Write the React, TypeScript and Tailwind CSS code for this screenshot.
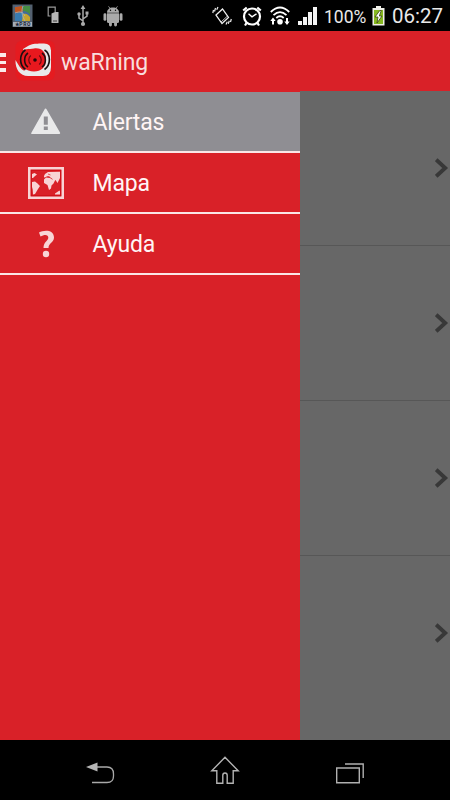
import type { ReactNode } from "react";

function AppBadgeIcon() {
  return (
    <svg width="22" height="24" viewBox="0 0 22 24">
      <rect x="0.5" y="0.5" width="20" height="22.5" fill="#53606f" />
      <rect x="3" y="2" width="15" height="15" fill="#426b9a" />
      <path d="M3 3l7-1 1 5-4 4-4-3z" fill="#c0561f" />
      <path d="M11 2h7v9c-2-3-4-4-7-4z" fill="#468d45" />
      <path d="M3 10l5-2 4 2-1 7H3z" fill="#387bb0" />
      <path d="M11 10c4-1 5 1 7 3v4h-8z" fill="#c5a52c" />
      <path d="M3 9c5-2 8-1 10 3M11 2c-2 5-1 10 2 15" fill="none" stroke="#a9b6bd" strokeWidth="0.8" />
      <rect x="1" y="18" width="19" height="4.5" fill="#a5adb7" />
      <text x="2.5" y="22" fontSize="5" fontWeight="700" textLength="16" fill="#17243b" fontFamily="Roboto, sans-serif">
        ★PRO
      </text>
    </svg>
  );
}

function DevicesIcon() {
  return (
    <svg width="14" height="18" viewBox="0 0 14 18" fill="none" stroke="#999" strokeWidth="1.2">
      <path d="M3.5 10H1.2V1.2h7V6" />
      <path d="M4.5 7.5L8 6h3.500v11h-7z" fill="#b5b5b5" stroke="none" />
      <path d="M6 15h4" stroke="#555" />
    </svg>
  );
}

function UsbIcon() {
  return (
    <svg width="12" height="22" viewBox="0 0 12 22" fill="none" stroke="#aaa" strokeWidth="1.5">
      <path d="M6 3v16M6 16l-4-3V9M6 14l4-3V8" />
      <path d="M6 0l2.4 4H3.6zM8.5 6.5h3v3h-3z" fill="#aaa" stroke="none" />
      <circle cx="2" cy="9" r="1.7" fill="#aaa" stroke="none" />
      <circle cx="6" cy="19" r="2.1" fill="#aaa" stroke="none" />
    </svg>
  );
}

function AndroidIcon() {
  return (
    <svg width="20" height="21" viewBox="0 0 20 21" fill="#aaa">
      <path d="M4 6.7C4 3.5 6.5 1.5 10 1.5s6 2 6 5.2z" />
      <path d="M5.5 0.3l2 2.7M14.5 0.3l-2 2.7" stroke="#aaa" strokeWidth="0.8" />
      <circle cx="7.5" cy="4.2" r="0.7" fill="#000" />
      <circle cx="12.5" cy="4.2" r="0.7" fill="#000" />
      <path d="M4 7.3h12v8.2q0 1.5-1.5 1.5h-9Q4 17 4 15.5z" />
      <rect x="0.5" y="7.3" width="2.9" height="7.5" rx="1.4" />
      <rect x="16.6" y="7.3" width="2.9" height="7.5" rx="1.4" />
      <rect x="6" y="14" width="2.9" height="6.5" rx="1.4" />
      <rect x="11.1" y="14" width="2.9" height="6.5" rx="1.4" />
    </svg>
  );
}

function VibrateIcon() {
  return (
    <svg width="20" height="20" viewBox="0 0 20 20" fill="none" stroke="#eee" strokeWidth="1.2">
      <path d="M4 9l6.5-6 6 8.500-6.500 6z" strokeWidth="1.3" />
      <path d="M9 16l6.500-6" strokeWidth="0.8" />
      <path d="M0.8 7L1.500 4M2.500 5.500L3.500 2M4.700 3.800L6 1M14 18.500l1.300-2.700M16.300 17.700l1-3M18.500 16l.8-3" />
    </svg>
  );
}

function AlarmIcon() {
  return (
    <svg width="20" height="21" viewBox="0 0 20 21" fill="none" stroke="#fff">
      <circle cx="10" cy="10.5" r="8" strokeWidth="2.2" />
      <path d="M6.5 7.8l3.5 3 4.5-3" strokeWidth="1.4" />
      <path d="M1.2 4.5l3.5-3M15.3 1.5l3.5 3M4.5 17L3 19.5M15.5 17l1.5 2.5" strokeWidth="2.2" />
    </svg>
  );
}

function WifiIcon() {
  return (
    <svg width="20" height="20" viewBox="0 0 20 20" fill="none" stroke="#fff" strokeWidth="1.8">
      <path d="M0.8 6Q10-3 19.2 6M3.5 9.2Q10 3 16.5 9.2M6.3 12Q10 8.5 13.7 12" />
      <circle cx="10" cy="15.8" r="2.8" fill="#fff" stroke="none" />
      <path d="M3 11.5L5.700 15H4v3.500H2V15H.3zM17 19l-2.700-3.500H16V12h2v3.500h1.700z" fill="#fff" stroke="none" />
    </svg>
  );
}

function SignalIcon() {
  return (
    <svg width="20" height="18" viewBox="0 0 20 18" fill="#f4f4f4">
      <path d="M0 14h4v4H0zM5 10h4v8H5zM10 5h4v13h-4zM15 0h4v18h-4z" />
    </svg>
  );
}

function BatteryIcon() {
  return (
    <svg width="13" height="20" viewBox="0 0 13 20">
      <path d="M4 0h5v2h3.5v17.5H.5V2H4z" fill="#f0f0e9" />
      <path d="M2 4h9v14H2z" fill="#86b81f" />
      <path d="M7.8 4.5L3 11h3l-1 6 5-7H7.300l2-5.500z" fill="#fff" stroke="#39420d" strokeWidth="0.8" />
    </svg>
  );
}

function StatusBar() {
  return (
    <div className="flex h-[31px] shrink-0 bg-black text-[#e9e9e9]">
      <div className="ml-3 mt-1 w-[35px]"><AppBadgeIcon /></div>
      <div className="mt-1.5 w-[30px]"><DevicesIcon /></div>
      <div className="mt-[5px] w-[26px]"><UsbIcon /></div>
      <div className="mt-[6px]"><AndroidIcon /></div>
      <div className="ml-auto mt-1.5 w-[30px]"><VibrateIcon /></div>
      <div className="mt-1.5 w-7"><AlarmIcon /></div>
      <div className="mt-1.5 w-7"><WifiIcon /></div>
      <div className="mt-[7px] w-[26px]"><SignalIcon /></div>
      <div className="w-12 pt-[5px] text-[17.5px] leading-[24px]">100%</div>
      <div className="mt-1.5 w-5"><BatteryIcon /></div>
      <div className="w-[58px] text-[20.5px] leading-[33px]">06:27</div>
    </div>
  );
}

function AppLogo() {
  return (
    <svg width="41" height="41" viewBox="0 0 41 41" fill="none">
      <rect x="0.5" y="0.5" width="39.5" height="40" rx="7" fill="#e51b20" />
      <path d="M13 6C17 3.5 20 4 24 3.500h5q7 0 7 7V27q0 9-8 9H13C5 36 0 29 .5 20c3 5 5 9 9 11L8 9z" fill="#e9e9e9" />
      <path d="M5 12C8 8 14 9.500 19 8.500c8-1 12 4 12 11 0 8-5 12-12 12C11 31.500 5 26 4 20z" fill="#e8181e" />
      <path d="M10.5 10C4 14 4 25 10.500 29.500M29.500 10c6.500 4 6.500 15 0 19.500" stroke="#171111" strokeWidth="1.6" />
      <path d="M13 13c-4.500 3-4.500 11 0 14M27 13c4.500 3 4.500 11 0 14" stroke="#220d0f" strokeWidth="1.6" />
      <path d="M15.800 15.500c-2.700 2-2.700 7 0 9M24.200 15.500c2.700 2 2.700 7 0 9" stroke="#6b080f" strokeWidth="1.2" />
      <circle cx="20" cy="20" r="1.8" fill="#240608" />
    </svg>
  );
}

function Header() {
  return (
    <header className="flex h-[60px] shrink-0 items-start bg-[#d92128] text-[#f9dddd]">
      <div className="mt-[22px] flex w-[15px] flex-col gap-1">
        <div className="h-[3.5px] w-1.5 bg-[#fbeaea]" />
        <div className="h-[3.5px] w-1.5 bg-[#fbeaea]" />
        <div className="h-[3.5px] w-1.5 bg-[#fbeaea]" />
      </div>
      <div className="w-[46px] pt-[9px]"><AppLogo /></div>
      <h1 className="pt-4 text-[23px] leading-[32px] tracking-[-0.1px]">waRning</h1>
    </header>
  );
}

function WarningIcon() {
  return (
    <svg width="30" height="27" viewBox="0 0 30 27" fill="#e9e9ea">
      <path d="M14.5 0.5Q15.2 0.5 15.7 1.5L29 24.5q.6 1.5-.8 1.500H1q-1.300 0-.5-1.500L13.500 1.500q.4-1 1-1z" />
      <path d="M12.8 8.5h4v8.200h-4zM12.800 18.500h4v3.500h-4z" fill="#8f8e93" />
    </svg>
  );
}

function WorldMapIcon() {
  return (
    <svg width="36" height="32" viewBox="0 0 36 32" fill="#f8d4d5">
      <rect x="1.3" y="1.3" width="33.4" height="29.4" fill="none" stroke="#f8d4d5" strokeWidth="2.6" />
      <rect x="3.3" y="3.3" width="29.4" height="25.4" fill="none" stroke="#ce1017" strokeWidth="1" />
      <path d="M4 7l2.500-1 2.500 1.500-2 1.500-2 2H4zM4 15l3-.5 2.500 2 2.500 2.500-2 3-3 5-2 .5-.3-5L4 20z" />
      <path d="M16 12.500l2-2 4 .5 3 2 2 .5-1.500 3-2 2-.5 3-2 1.500-1.500-5-3.500-2zM16 9l1-2 3-2 12-.3V11l-1.500 3-1 2-2-3-1.500 1.500-2-3-3-2-3 .5-2 .5zM27 26.500l4.500-3 .5 1v3h-5z" />
      <path d="M20 7l2.500 1M18.500 9.500l3 .2" stroke="#d92128" strokeWidth="0.7" />
    </svg>
  );
}

function QuestionIcon() {
  return (
    <svg width="17" height="28" viewBox="0 0 17 28" fill="#f8d4d5">
      <path d="M1 2.5C6-.5 16-.5 16 7.5c0 5-5.500 5.500-5.500 10.500H5.500C5.500 11.500 10.300 11 10.300 7.700 10.300 4 6 4.500 2.500 6.500z" />
      <circle cx="8" cy="24" r="3.2" />
    </svg>
  );
}

type MenuRowProps = {
  label: string;
  icon: ReactNode;
  active?: boolean;
};

function MenuRow({ label, icon, active }: MenuRowProps) {
  return (
    <li className={`flex h-[61px] items-center border-b-2 border-[#fae6e6] ${active ? "bg-[#8f8e93]" : "bg-[#d92128]"}`}>
      <div className="flex w-[92.5px] justify-center">{icon}</div>
      <span className="pt-[3px] text-[23px] leading-[34px] tracking-[-0.2px] text-[#fff5f5]">{label}</span>
    </li>
  );
}

function Drawer() {
  return (
    <nav className="w-[300px] bg-[#d92128] pt-px">
      <ul>
        <MenuRow label="Alertas" icon={<WarningIcon />} active />
        <MenuRow label="Mapa" icon={<WorldMapIcon />} />
        <MenuRow label="Ayuda" icon={<QuestionIcon />} />
      </ul>
    </nav>
  );
}

function AlertRows() {
  return (
    <div className="w-[150px] bg-[#676767]">
      {[0, 1, 2, 3].map((row) => (
        <div
          key={row}
          className="flex h-[155px] items-center justify-end border-b border-[#575757] pr-px last:border-transparent"
        >
          <svg width="14" height="20" viewBox="0 0 14 20" fill="none" stroke="#383838" strokeWidth="3.9">
            <path d="M1.2 1.700L10.200 10l-9 8.300" />
          </svg>
        </div>
      ))}
    </div>
  );
}

function NavigationBar() {
  return (
    <footer className="flex h-[60px] shrink-0 items-start bg-black">
      <svg className="ml-[86px] mt-[21px]" width="29" height="23" viewBox="0 0 29 23" fill="none" stroke="#a9a9a9" strokeWidth="1.3">
        <path d="M9 6h12q6.5 0 6.500 7v2q0 6.500-6.500 6.500H6" />
        <path d="M0 6L11.5 1.500v9z" fill="#b5b5b5" stroke="none" />
      </svg>
      <svg className="ml-[95px] mt-[16px]" width="30" height="29" viewBox="0 0 30 29" fill="none" stroke="#b3b3b3" strokeWidth="1.4">
        <path d="M15 1.3L1.800 14.800H6.800v12.400h6v-8q0-2.200 2.200-2.200t2.200 2.200v8h6V14.800h5z" />
      </svg>
      <svg className="ml-[95px] mt-[22px]" width="30" height="24" viewBox="0 0 30 24" fill="none" stroke="#b0b0b0" strokeWidth="1.4">
        <path d="M1.7 6h22.600v14.700H1.700zM10 2h18.200v14" />
      </svg>
    </footer>
  );
}

export default function App() {
  return (
    <div className="flex h-[800px] w-[450px] flex-col overflow-hidden bg-black font-[Roboto,sans-serif]">
      <StatusBar />
      <Header />
      <main className="flex min-h-0 flex-1">
        <Drawer />
        <AlertRows />
      </main>
      <NavigationBar />
    </div>
  );
}
